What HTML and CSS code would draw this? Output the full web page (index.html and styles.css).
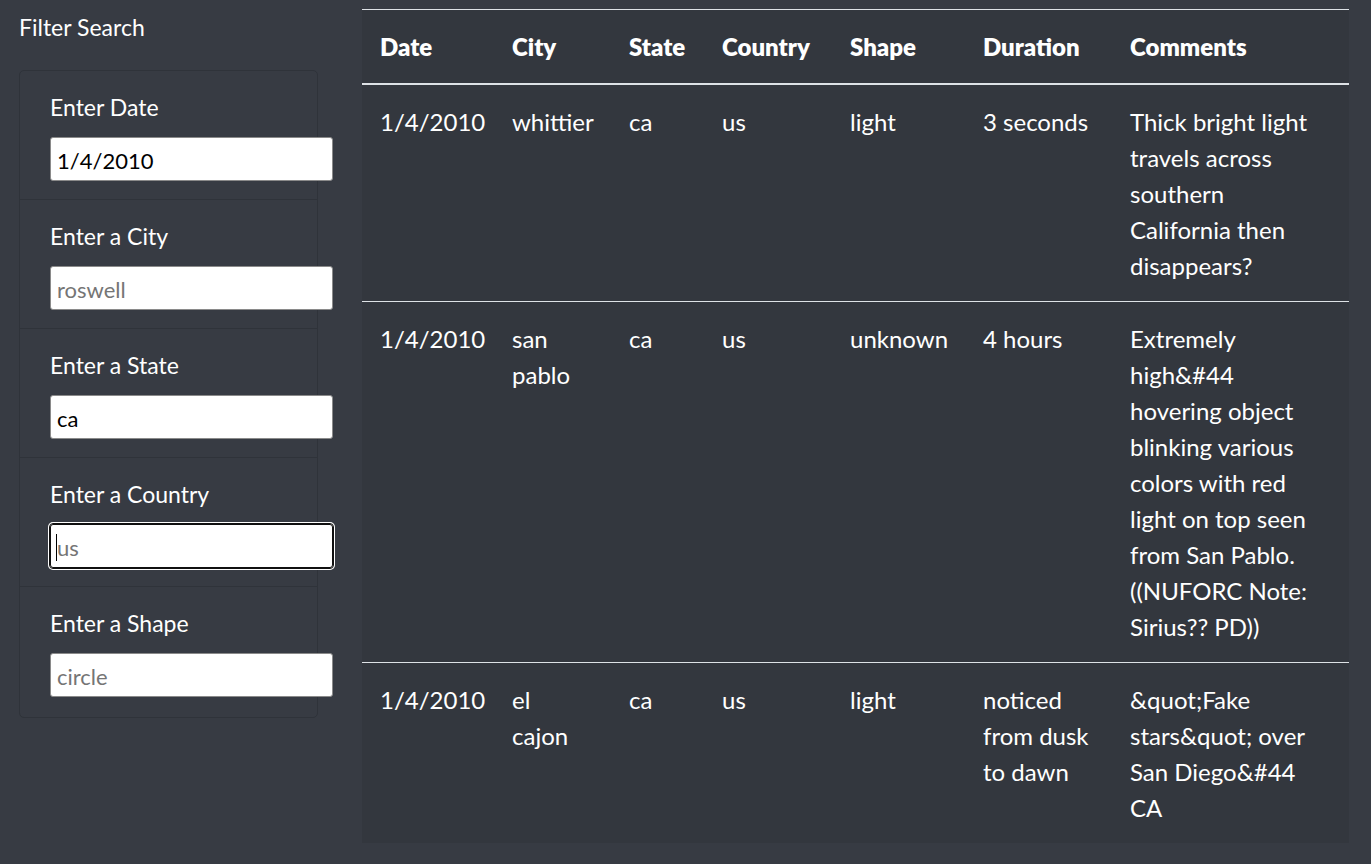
FILE: index.html
```html
<!DOCTYPE html>
<html lang="en">
<head>
<meta charset="utf-8">
<title>UFO Sightings</title>
<link rel="stylesheet" href="styles.css">
</head>
<body>
<div class="page">
  <aside class="sidebar">
    <div class="sidebar-title">Filter Search</div>
    <ul class="filters">
      <li class="filter-item">
        <label class="filter-label" for="datetime">Enter Date</label>
        <input class="filter-input" id="datetime" type="text" value="1/4/2010" placeholder="1/1/2010">
      </li>
      <li class="filter-item">
        <label class="filter-label" for="city">Enter a City</label>
        <input class="filter-input" id="city" type="text" placeholder="roswell">
      </li>
      <li class="filter-item">
        <label class="filter-label" for="state">Enter a State</label>
        <input class="filter-input" id="state" type="text" value="ca" placeholder="nm">
      </li>
      <li class="filter-item">
        <label class="filter-label" for="country">Enter a Country</label>
        <span class="input-wrap">
          <input class="filter-input is-focused" id="country" type="text" placeholder="us">
          <span class="caret"></span>
        </span>
      </li>
      <li class="filter-item">
        <label class="filter-label" for="shape">Enter a Shape</label>
        <input class="filter-input" id="shape" type="text" placeholder="circle">
      </li>
    </ul>
  </aside>
  <main class="results">
    <table class="ufo-table">
      <colgroup>
        <col class="c-date"><col class="c-city"><col class="c-state"><col class="c-country"><col class="c-shape"><col class="c-duration"><col class="c-comments">
      </colgroup>
      <thead>
        <tr>
          <th>Date</th><th>City</th><th>State</th><th>Country</th><th>Shape</th><th>Duration</th><th>Comments</th>
        </tr>
      </thead>
      <tbody>
        <tr>
          <td>1/4/2010</td><td class="cell-city">whittier</td><td>ca</td><td>us</td><td>light</td><td>3 seconds</td>
          <td>Thick bright light travels across southern California then disappears?</td>
        </tr>
        <tr>
          <td>1/4/2010</td><td class="cell-city">san pablo</td><td>ca</td><td>us</td><td>unknown</td><td>4 hours</td>
          <td>Extremely high&amp;#44 hovering object blinking various colors with red light on top seen from San Pablo.  ((NUFORC Note: Sirius?? PD))</td>
        </tr>
        <tr>
          <td>1/4/2010</td><td class="cell-city">el cajon</td><td>ca</td><td>us</td><td>light</td><td>noticed from dusk to dawn</td>
          <td>&amp;quot;Fake stars&amp;quot; over San Diego&amp;#44 CA</td>
        </tr>
      </tbody>
    </table>
  </main>
</div>
</body>
</html>
```

FILE: styles.css
```css
html, body {
  margin: 0;
  padding: 0;
}
body {
  background: #373b43;
  color: #ffffff;
  font-family: Lato, "Open Sans", sans-serif;
  font-size: 24px;
  line-height: 1.5;
}
.page {
  display: flex;
  align-items: flex-start;
  min-height: 864px;
}
.sidebar {
  width: 342px;
  flex: 0 0 342px;
  padding: 9px 0 0 19px;
  box-sizing: border-box;
}
.sidebar-title {
  font-size: 23px;
  line-height: 36px;
  margin-bottom: 25px;
}
.filters {
  list-style: none;
  margin: 0;
  padding: 0;
  width: 297px;
  border: 1px solid #2f333a;
  border-radius: 5px;
}
.filter-item {
  display: flex;
  flex-direction: column;
  align-items: flex-start;
  padding: 18px 0 18px 30px;
  border-top: 1px solid #2f333a;
}
.filter-item:first-child {
  border-top: 0;
}
.filter-item:last-child {
  padding-bottom: 20px;
}
.filter-label {
  font-size: 23px;
  line-height: 36px;
  margin-bottom: 12px;
}
.filter-input {
  width: 283px;
  height: 44px;
  box-sizing: border-box;
  border: 1px solid #8a8a8a;
  border-radius: 3px;
  background: #ffffff;
  color: #000000;
  font-family: inherit;
  font-size: 22px;
  padding: 3px 6px 0;
  margin: 0;
  outline: none;
}
.filter-input::placeholder {
  color: #757575;
}
.filter-input.is-focused {
  border-color: #101010;
  outline: 1px solid #101010;
  box-shadow: 0 0 0 2px #ffffff;
}
.input-wrap {
  position: relative;
  display: block;
}
.caret {
  position: absolute;
  left: 6px;
  top: 10px;
  width: 1px;
  height: 27px;
  background: #000000;
}
.results {
  flex: 1;
  padding: 9px 22px 0 20px;
}
.ufo-table {
  width: 987px;
  table-layout: fixed;
  border-collapse: collapse;
  background: #33373e;
  color: #ffffff;
}
.c-date { width: 132px; }
.c-city { width: 117px; }
.c-state { width: 93px; }
.c-country { width: 128px; }
.c-shape { width: 133px; }
.c-duration { width: 147px; }
.c-comments { width: 237px; }
.ufo-table th,
.ufo-table td {
  padding: 19px 18px 17px;
  text-align: left;
  vertical-align: top;
  border-top: 1px solid #dee2e6;
  line-height: 36px;
}
.ufo-table th {
  font-weight: 800;
  padding-bottom: 18px;
  border-bottom: 2px solid #dee2e6;
}
.ufo-table td.cell-city {
  padding-right: 22px;
}
.ufo-table thead + tbody tr:first-child td {
  border-top: 0;
}
```
